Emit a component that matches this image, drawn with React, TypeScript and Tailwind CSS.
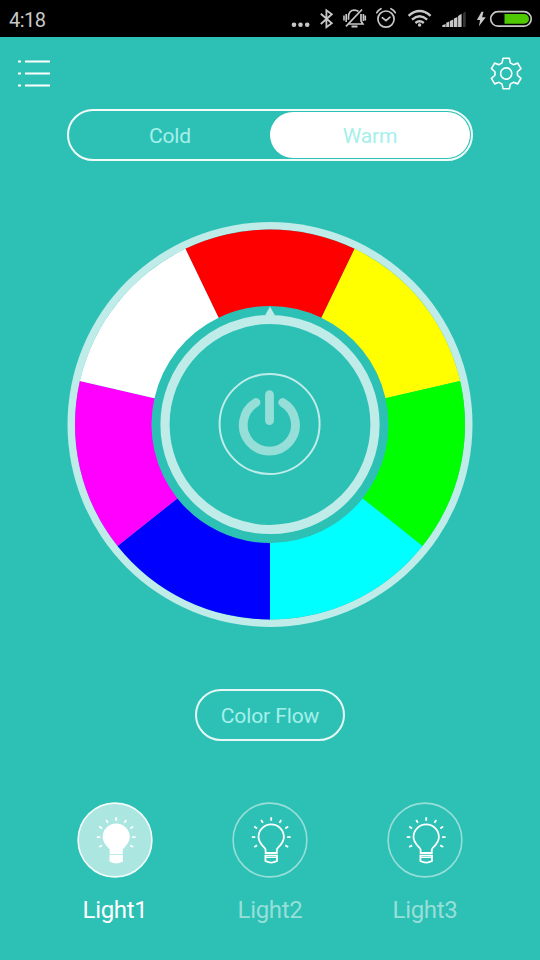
import React from "react";

const WHEEL_COLORS = ["#ff0000", "#ffff00", "#00ff00", "#00ffff", "#0000ff", "#ff00ff", "#ffffff"];

function polar(r: number, deg: number) {
  const a = (deg * Math.PI) / 180;
  return `${(r * Math.sin(a)).toFixed(2)} ${(-r * Math.cos(a)).toFixed(2)}`;
}

function segment(i: number) {
  const step = 360 / WHEEL_COLORS.length;
  const from = (i - 0.5) * step;
  const to = from + step;
  return `M${polar(118.5, from)}L${polar(195, from)}A195 195 0 0 1 ${polar(195, to)}L${polar(118.5, to)}A118.5 118.5 0 0 0 ${polar(118.5, from)}Z`;
}

function StatusBar() {
  return (
    <div className="flex h-[37px] shrink-0 items-start bg-black pl-[9px] text-[#c8c8c8]">
      <span className="mt-[5px] w-[280px] text-[20px] leading-[30px] tracking-[-0.5px]">4:18</span>
      <svg className="h-[37px] w-[24px]" viewBox="289 0 24 37" fill="currentColor">
        <circle cx="294" cy="24.7" r="2.3" />
        <circle cx="300.5" cy="24.7" r="2.3" />
        <circle cx="307.2" cy="24.7" r="2.3" />
      </svg>
      <svg className="h-[37px] w-[25px]" viewBox="313 0 25 37" fill="none" stroke="currentColor" strokeWidth="1.8">
        <path d="M320.8 13.7 331.8 23.3 326.4 27.3V10.3L331.8 14.2 320.8 24" />
      </svg>
      <svg className="h-[37px] w-[32px]" viewBox="338 0 32 37" fill="none" stroke="currentColor" strokeWidth="1.7">
        <path d="M358.5 11.5c-1.2-.9-2.5-1.4-4-1.4-4 0-6 3-6 6.5v3.2M361 14v7l1.9 3h-13.9" />
        <path d="M362 9.5 346 26.3" />
        <path d="M351.5 26.5h6" strokeWidth="2" />
        <path d="M346.2 14v8M344 15.5v5M363.4 14v7M365.3 15.5v5" strokeWidth="1.6" />
      </svg>
      <svg className="h-[37px] w-[33px]" viewBox="370 0 33 37" fill="none" stroke="currentColor" strokeWidth="1.7" strokeLinecap="round">
        <circle cx="386" cy="19.1" r="8.1" />
        <path d="m382.3 17.7 3.7 3 4-3.5M376.8 12.7q1.4-2.8 4.2-4M391 8.7q2.8 1.2 4.3 4" />
      </svg>
      <svg className="h-[37px] w-[35px]" viewBox="403 0 35 37" fill="none" stroke="currentColor" strokeWidth="2.4">
        <path d="M408.6 15.8q11-9.4 22 0M412 19.6q7.6-6.6 15.2 0M415.4 23q4.2-3.6 8.4 0" />
        <circle cx="419.6" cy="25" r="1.7" fill="currentColor" stroke="none" />
      </svg>
      <svg className="h-[37px] w-[35px]" viewBox="438 0 35 37" fill="currentColor">
        <path d="M442.3 27v-1.7l3.3-1.2V27zM446.2 27v-4.3l3-1.2V27zM449.9 27v-6l3.3-1.5V27zM453.9 27v-8.4l3.5-1.5V27zM458.1 27V16l3.5-2.2V27z" />
        <path d="m463 13.3 2.7-1.8V27H463z" fill="#333535" />
      </svg>
      <svg className="h-[37px] w-[67px]" viewBox="473 0 67 37">
        <path d="m481.5 11.7-4.6 8.2h3.2l-1.2 6.4 6.9-9.1h-3.7l1.4-5.5z" fill="currentColor" />
        <rect x="490.7" y="11.7" width="40.5" height="14.4" rx="7.2" fill="none" stroke="currentColor" strokeWidth="1.7" />
        <path d="M504.5 14h19.6a4.9 4.9 0 0 1 0 9.8h-19.6z" fill="#4fc800" />
      </svg>
    </div>
  );
}

function ListIcon() {
  return (
    <svg className="h-[30px] w-[34px]" viewBox="17 58 34 30" fill="none" stroke="white" strokeWidth="1.9">
      <path d="M18 61.5h3M25 61.5h25M18 73.5h3M25 73.5h25M18 85.5h3M25 85.5h25" />
    </svg>
  );
}

function GearIcon() {
  const points: string[] = [];
  for (let k = 0; k < 6; k++) {
    const a = (k * Math.PI) / 3;
    for (const [x, y] of [[-4.1, -10.6], [-3.2, -15.2], [3.2, -15.2], [4.1, -10.6]]) {
      points.push(`${(x * Math.cos(a) - y * Math.sin(a)).toFixed(2)},${(x * Math.sin(a) + y * Math.cos(a)).toFixed(2)}`);
    }
  }
  return (
    <svg className="h-[34px] w-[34px]" viewBox="-17.2 -17.5 34 34" fill="none" stroke="white" strokeWidth="1.6" strokeLinejoin="round">
      <polygon points={points.join(" ")} />
      <circle r="5.6" />
    </svg>
  );
}

function ColorWheel() {
  return (
    <svg className="block h-[406px] w-[406px]" viewBox="-203 -203.5 406 406">
      <circle r="202.5" fill="#bfece8" />
      <circle r="195" fill="#2dc0b5" />
      {WHEEL_COLORS.map((color, i) => (
        <path key={color} d={segment(i)} fill={color} />
      ))}
      <circle r="105" fill="none" stroke="#bfece8" strokeWidth="9.2" />
      <path d="M-5-109 0-118 5-109z" fill="#bfece8" />
      <circle cx="-.4" cy="-.5" r="50" fill="none" stroke="#bfece8" strokeWidth="2" />
      <g fill="none" stroke="#96dfd8" strokeWidth="8.8" strokeLinecap="round">
        <path d="M-.5-29.8V-3.8M-14-22A26.1 26.1 0 1 0 12.7-22" />
      </g>
    </svg>
  );
}

function Light({ name, active }: { name: string; active?: boolean }) {
  return (
    <div className="flex w-[155px] flex-col items-center">
      <svg className="h-[76px] w-[76px]" viewBox="-38 -38 76 76" fill="none">
        <circle r="36.9" fill={active ? "#abe6e1" : "none"} stroke={active ? "#f2fcfb" : "#96dfd8"} strokeWidth="1.6" />
        <g stroke="white" strokeWidth="1.8" transform="translate(1.2 .2)">
          <path
            d="M-5.6 12.8V9.4C-5.8 6.9-12.7 4-12.7-3.2a12.7 12.7 0 0 1 25.4 0C12.7 4 5.8 6.9 5.6 9.4v3.4z"
            fill={active ? "white" : "none"}
          />
          <path d="M-5.8 15.5H5.8v5.3Q0 24-5.8 20.8z" fill={active ? "white" : "none"} />
          {!active && <path d="M-5.8 17.3H5.8" strokeWidth="1" />}
          <path d="M0-23v3.5M-10-20.2l1.7 2.9M10-20.2l-1.7 2.9M-17-13.6l2.9 1.8M17-13.6l-2.9 1.8M-19.4-3.1h3.5M19.4-3.1h-3.5M-17 6.8l2.9-1.6M17 6.8l-2.9-1.6" />
        </g>
      </svg>
      <span className={`mt-[16px] text-[24px] leading-[32px] tracking-[-0.3px] ${active ? "text-white" : "text-[#96dfd8]"}`}>{name}</span>
    </div>
  );
}

export default function App() {
  return (
    <div className="flex h-[960px] w-[540px] flex-col overflow-hidden bg-[#2dc0b5] font-['Roboto',sans-serif]">
      <StatusBar />
      <header className="flex h-[72px] shrink-0 items-center justify-between pr-[17px] pl-[17px]">
        <ListIcon />
        <GearIcon />
      </header>
      <div className="mx-auto flex h-[52px] w-[406px] shrink-0 rounded-full border-2 border-[#f0fbfa] p-[1px] text-[21px] tracking-[-0.2px] text-[#a5f0eb]">
        <button className="w-[200px] pt-[4px]">Cold</button>
        <button className="w-[200px] rounded-full bg-white pt-[4px]">Warm</button>
      </div>
      <div className="mx-auto mt-[60px] shrink-0">
        <ColorWheel />
      </div>
      <button className="mx-auto mt-[62px] h-[52px] w-[150px] shrink-0 rounded-full border-2 border-[#e6f8f6] pt-[4px] text-[21px] tracking-[-0.1px] text-[#a5f0eb]">
        Color Flow
      </button>
      <div className="mt-[61px] flex justify-center">
        <Light name="Light1" active />
        <Light name="Light2" />
        <Light name="Light3" />
      </div>
    </div>
  );
}
